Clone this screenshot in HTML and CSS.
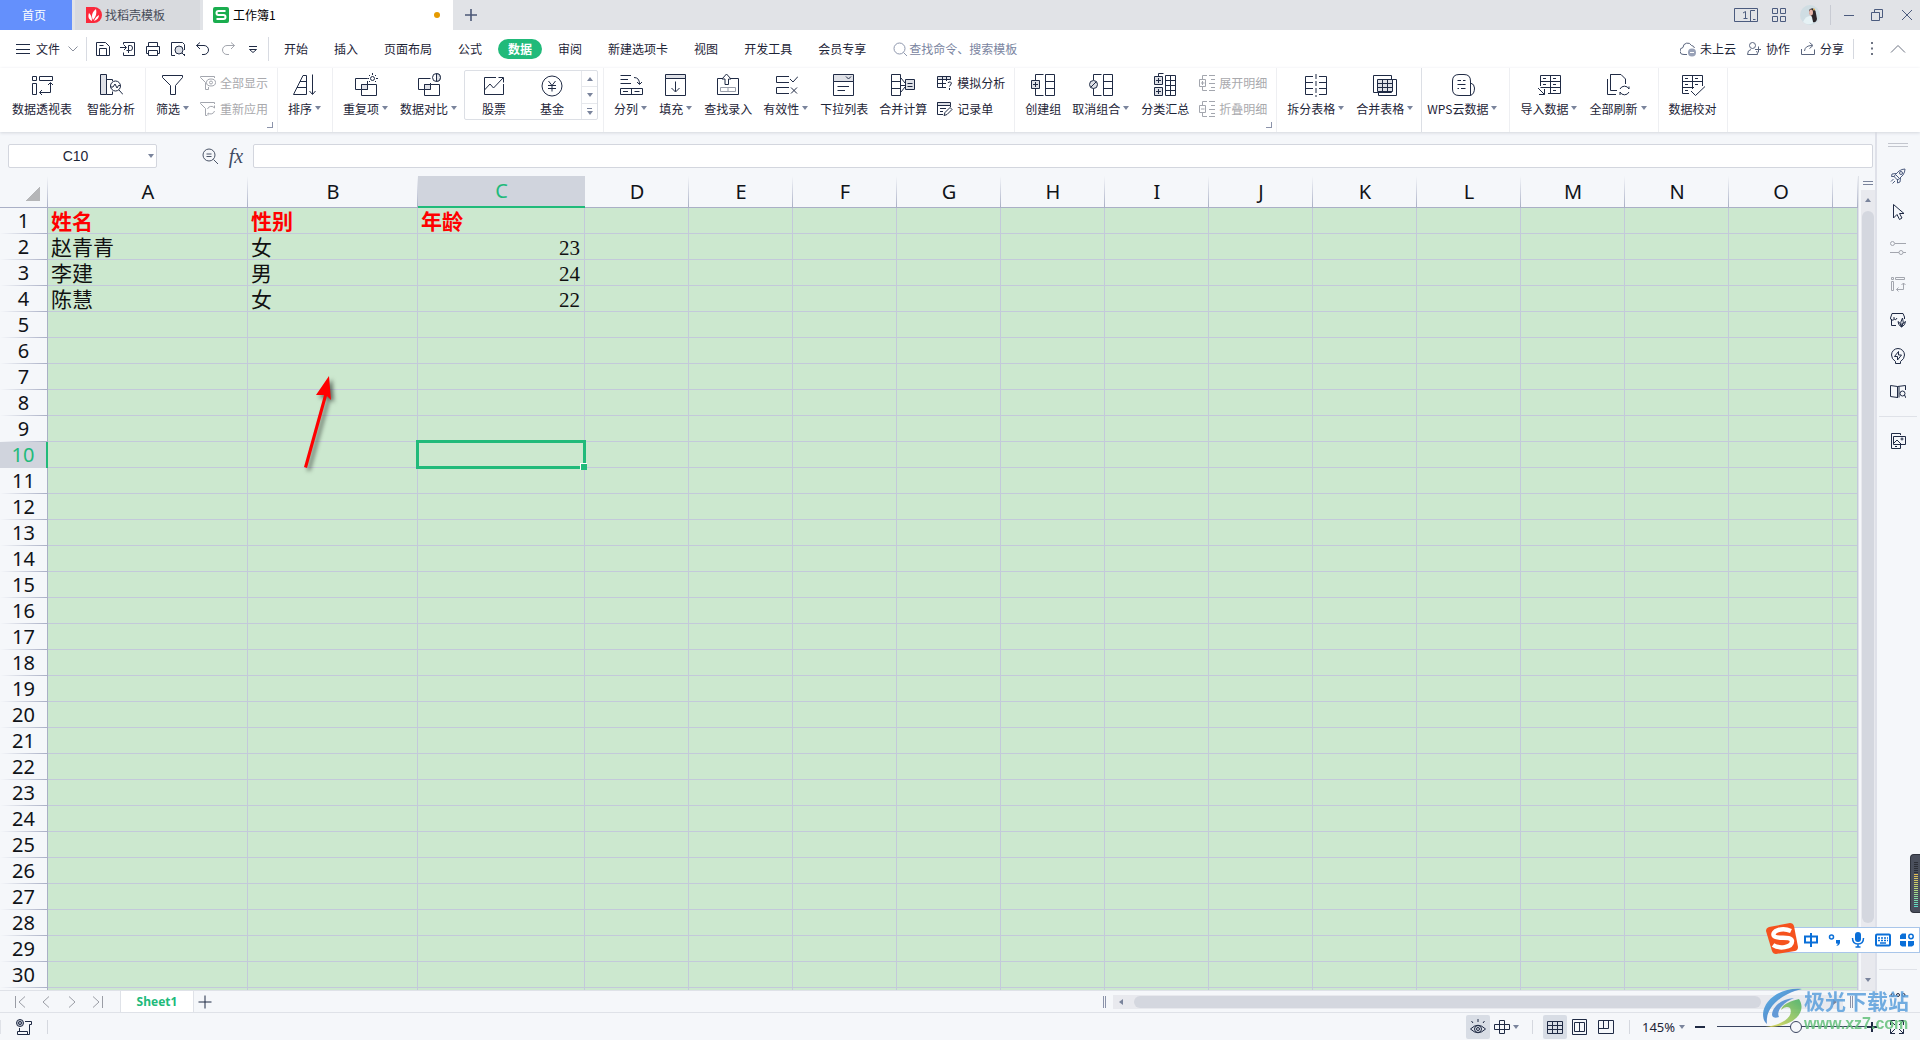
FILE: index.html
```html
<!DOCTYPE html>
<html lang="zh-CN">
<head>
<meta charset="utf-8">
<title>工作簿1</title>
<link rel="stylesheet" href="styles.css">
</head>
<body>
<header class="titlebar">
  <button class="tab tab-home">首页</button>
  <button class="tab tab-docer"><svg width="16" height="16" viewBox="0 0 16 16"><path d="M0 0H8A8 8 0 0 1 8 16H0Z" fill="#fb2a3c"/><path d="M6 14C2 12 2 9 3 6C5 8 6 10 6 14ZM7 13C5 9 6 5 10 2C11 6 10 10 7 13ZM8 14C9 11 11 9 13 8C13 11 11 13 8 14Z" fill="#fff"/></svg>找稻壳模板</button>
  <button class="tab tab-book"><svg width="16" height="16" viewBox="0 0 16 16"><rect width="16" height="16" rx="2" fill="#1aad4f"/><path d="M12.5 4H5.5Q3.5 4 3.5 6T5.5 8H10.5Q12.5 8 12.5 10T10.5 12H3.5" fill="none" stroke="#fff" stroke-width="2"/></svg>工作簿1<i class="unsaved"></i></button>
  <button class="icon-btn new-tab" aria-label="新建"><svg width="12" height="12" viewBox="0 0 12 12"><path d="M6 0V12M0 6H12" stroke="#4b5877" stroke-width="1.6"/></svg></button>
  <div class="window-tools">
    <button class="icon-btn" aria-label="窗口"><svg width="24" height="14" viewBox="0 0 24 14" class="blue"><path d="M.5 .5H23.5V13.5H.5ZM16.5 2.5H21M16.5 2.5V13.5M19 11.5H21.5M9 5L11.5 3.5V10.5M9.5 10.5H13.5"/></svg></button>
    <button class="icon-btn" aria-label="应用"><svg width="14" height="14" viewBox="0 0 14 14" class="blue"><path d="M.5 .5H5.5V5.5H.5ZM8.500 .5H13.5V5.5H8.500ZM.5 8.500H5.5V13.5H.5ZM8.500 8.500H13.5V13.5H8.500Z"/></svg></button>
    <button class="icon-btn" aria-label="账户"><svg class="avatar" width="20" height="20" viewBox="0 0 20 20"><circle cx="10" cy="10" r="10" fill="#cfdde3"/><path d="M9 5Q13 1 15.500 6L17 14Q16 18 13 17L12 12L9 8Z" fill="#2a2428"/><ellipse cx="11" cy="7.500" rx="2" ry="3" fill="#e6b8ac"/><path d="M3 17Q6 10 11 11L13 18Q8 21 3 17Z" fill="#e6f2f5"/><circle cx="14" cy="4.500" r="1" fill="#e0b45a"/></svg></button>
    <i class="vline"></i>
    <button class="icon-btn" aria-label="最小化"><svg width="12" height="12" viewBox="0 0 12 12" class="blue"><path d="M1 6.500H11"/></svg></button>
    <button class="icon-btn" aria-label="还原"><svg width="12" height="12" viewBox="0 0 12 12" class="blue"><path d="M3.500 3.500V.5H11.500V8.500H8.500M.5 3.500H8.500V11.500H.5Z"/></svg></button>
    <button class="icon-btn" aria-label="关闭"><svg width="12" height="12" viewBox="0 0 12 12" class="blue"><path d="M1 1L11 11M11 1L1 11"/></svg></button>
  </div>
</header>

<nav class="menubar">
  <button class="file-menu"><svg width="14" height="12" viewBox="0 0 14 12"><path d="M0 1.500H14M0 6.500H14M0 10.500H14"/></svg>文件<svg width="10" height="6" viewBox="0 0 10 6" class="chev"><path d="M.5 .5L5 5L9.500 .5"/></svg></button>
  <div class="quick">
    <button class="icon-btn" aria-label="保存"><svg width="16" height="16" viewBox="0 0 16 16"><path d="M1.500 1.500H10.500L14.500 5.500V14.500H1.500ZM4.500 14V7.500H11.500V14M4.500 4.500H8.500"/></svg></button>
    <button class="icon-btn" aria-label="输出PDF"><svg width="16" height="16" viewBox="0 0 16 16"><path d="M3.500 3.500V1.500H14.500V14.500H3.500V11.500M0 6.500H6M4 4L6.500 6.500L4 9M8.500 12V9.500H6.500M8.500 9.500V4.500H10.500Q12.500 4.500 12.500 7T10.500 9.500H8.500"/></svg></button>
    <button class="icon-btn" aria-label="打印"><svg width="16" height="16" viewBox="0 0 16 16"><path d="M3.500 5V1.500H12.500V5M3.500 12.500H1.500V5.500H14.500V12.500H12.500M3.500 9.500H12.500V14.500H3.500Z"/></svg></button>
    <button class="icon-btn" aria-label="打印预览"><svg width="16" height="16" viewBox="0 0 16 16"><path d="M5 14.500H1.500V1.500H12.500L14.500 3.500V9"/><circle cx="9" cy="9" r="4" fill="#dcdfe6"/><path d="M12 12L15 15M14.500 13V15"/></svg></button>
    <button class="icon-btn" aria-label="撤销"><svg width="16" height="16" viewBox="0 0 16 16"><path d="M5 1.500L1.500 4.500L5 8M1.500 4.500H9A4.500 4.500 0 0 1 9 13.500H7"/></svg></button>
    <button class="icon-btn pale" aria-label="恢复"><svg width="16" height="16" viewBox="0 0 16 16"><path d="M11 1.500L14.500 4.500L11 8M14.500 4.500H7A4.500 4.500 0 0 0 7 13.500H9"/></svg></button>
    <button class="icon-btn" aria-label="自定义"><svg width="16" height="16" viewBox="0 0 16 16"><path d="M4 5.500H12M4.500 8.500L8 11.500L11.500 8.500Z"/></svg></button>
  </div>
  <div class="menus">
    <button>开始</button><button>插入</button><button>页面布局</button><button>公式</button><button class="on">数据</button><button>审阅</button><button>新建选项卡</button><button>视图</button><button>开发工具</button><button>会员专享</button>
  </div>
  <label class="search"><svg width="15" height="15" viewBox="0 0 15 15"><circle cx="6.500" cy="6.500" r="5.500"/><path d="M10.500 10.500L14 14"/></svg><input type="text" placeholder="查找命令、搜索模板" aria-label="查找命令"></label>
  <div class="share-tools">
    <button><svg width="16" height="16" viewBox="0 0 16 16"><path d="M7 13.500H4A3.500 3.500 0 0 1 3 6.500A4.500 4.500 0 0 1 11.500 4.500A3.500 3.500 0 0 1 14.500 7"/><circle cx="12" cy="11.500" r="4" fill="#99a2b8" stroke="none"/><path d="M10 11.500H14" stroke="#fff"/></svg>未上云</button>
    <button><svg width="16" height="16" viewBox="0 0 16 16"><circle cx="6.500" cy="4.500" r="3"/><path d="M5 8.500Q1.500 9 1.500 13.500H11.500Q11.500 11 10.500 10M9 8.500H15M12.500 5.500V11.500"/></svg>协作</button>
    <button><svg width="16" height="16" viewBox="0 0 16 16"><path d="M1.500 8V13.500H14.500V8.500M4.500 10Q5 4.500 12 4.500M9.500 1.500L13 4.500L9.500 7.500"/></svg>分享</button>
  </div>
  <i class="vline"></i>
  <button class="icon-btn more" aria-label="更多"><svg width="4" height="14" viewBox="0 0 4 14"><path d="M1 1H3M1 6.500H3M1 12H3" stroke-width="2"/></svg></button>
  <button class="icon-btn" aria-label="收起"><svg width="16" height="10" viewBox="0 0 16 10"><path d="M1 8.500L8 1.500L15 8.500"/></svg></button>
</nav>

<section class="ribbon">
  <div class="group first">
    <button class="cmd"><svg viewBox="0 0 24 24"><path d="M2.500 3.500H6.500V7.500H2.500ZM9.500 3.500H22.500V7.500H9.500ZM2.500 10.500H6.500V21.500H2.500ZM10 19.500H20.500V10M12 17L9.500 19.500L12 22M18 12L20.500 9.500L23 12"/></svg><span>数据透视表</span></button>
    <button class="cmd"><svg viewBox="0 0 24 24"><path d="M1.500 1.500H7.500V21.500H1.500Z" fill="#dfe1e7"/><path d="M7.500 6.500H13.500V8M7.500 21.500H13.500V18.500M20 17L24 21.500"/><circle cx="16.500" cy="13" r="5"/><path d="M11.500 14L14 14L16 11L18 15L19.500 12.500H21"/></svg><span>智能分析</span></button>
  </div>
  <div class="group launcher">
    <button class="cmd drop"><svg viewBox="0 0 24 24"><path d="M1.500 2.500H21.500V4.500L14.500 12.500V21.500H9.500V12.500L1.500 4.500Z"/></svg><span>筛选</span></button>
    <div class="stack pale">
      <button><svg viewBox="0 0 16 16"><path d="M5.500 14.500V7.500L.5 2.500V1.500H14.500V3M5.500 14.500H8.500V12"/><ellipse cx="11" cy="7.500" rx="4.500" ry="3.500"/><circle cx="11" cy="7.500" r="1.500"/></svg>全部显示</button>
      <button><svg viewBox="0 0 16 16"><path d="M5.500 14.500V7.500L.5 2.500V1.500H14.500V3M5.500 14.500H7M7.500 8A4 4 0 0 1 14.500 7V4.500M14.500 10A4 4 0 0 1 8 12V14.500"/></svg>重新应用</button>
    </div>
  </div>
  <div class="group">
    <button class="cmd drop"><svg viewBox="0 0 24 24"><path d="M.5 21.500L10 2.500H13.500V21.500ZM7 8.500H13.500M4 14.500H13.500M19.500 1.500V21M16.500 18L19.500 21.500L22.500 18"/></svg><span>排序</span></button>
  </div>
  <div class="group">
    <button class="cmd drop"><svg viewBox="0 0 24 24"><path d="M13.500 5.500H1.500V16.500H7.500M13.500 8V16.500M7.500 11.500H22.500V22.500H7.500ZM7.500 16.500H13.500V11.500"/><path d="M7.500 11.500H13.500V16.500H7.500Z" fill="#dfe1e7"/><circle cx="18.500" cy="5.500" r="2"/><path d="M18.500 0V2M13.500 5.500H15M22 5.500H24M15 2L16 3M22 2L21 3M15 9L16 8M22 9L21 8"/></svg><span>重复项</span></button>
    <button class="cmd drop"><svg viewBox="0 0 24 24"><path d="M13.500 5.500H1.500V16.500H7.500M13.500 10V16.500M7.500 11.500H22.500V22.500H7.500Z"/><path d="M7.500 11.500H13.500V16.500H7.500Z" fill="#dfe1e7"/><circle cx="19.500" cy="4.500" r="4"/><path d="M19.500 .5V8.500A4 4 0 0 0 19.500 .5" fill="#dfe1e7"/></svg><span>数据对比</span></button>
    <div class="gallery">
      <button class="cmd"><svg viewBox="0 0 24 24"><path d="M14 4.500H2.500V21.500H21.500V11M2.500 17L8 11L11.500 15L21 5M16.500 4.500H21.500V9.500"/></svg><span>股票</span></button>
      <button class="cmd"><svg viewBox="0 0 24 24"><circle cx="12" cy="13" r="10"/><path d="M8.500 8L12 12.500L15.500 8M12 12.500V18.500M8 12.500H16M8 15.500H16"/></svg><span>基金</span></button>
      <div class="gallery-nav"><button aria-label="上"><i class="caret up"></i></button><button aria-label="下"><i class="caret"></i></button><button aria-label="展开" class="all"><i class="caret"></i></button></div>
    </div>
  </div>
  <div class="group">
    <button class="cmd drop"><svg viewBox="0 0 24 24"><path d="M1.500 2.500H12M1.500 6.500H9M1.500 10.500H12M15 4.500Q20.500 4.500 20.500 11M18 9L20.500 11.500L23 9M1.500 15.500H23.500V21.500H1.500ZM12.500 15.500V21.500M4 18.500H9M15.500 18.500H20.500"/></svg><span>分列</span></button>
    <button class="cmd drop"><svg viewBox="0 0 24 24"><path d="M1.500 1.500H21.500V5.500H1.500Z" fill="#dfe1e7"/><path d="M1.500 5.500H21.500V22.500H1.500ZM11.500 8.500V18.500M7.500 15L11.500 19L15.500 15"/></svg><span>填充</span></button>
    <button class="cmd"><svg viewBox="0 0 24 24"><path d="M7 5.500H1.500V21.500H22.500V5.500H14"/><path d="M4.500 14.500H19.500V18.500H4.500ZM12 14.500V18.500" stroke="#999eaa"/><path d="M9 11.500V6H6L10.500 1L15 6H12.500V11.500Z" fill="#fff"/></svg><span>查找录入</span></button>
    <button class="cmd drop"><svg viewBox="0 0 24 24"><path d="M15 3.500H2.500V9.500H15M15 14.500H2.500V20.500H15M16 6L19 9L24 3.500M17 14.500L23 20.500M23 14.500L17 20.500"/></svg><span>有效性</span></button>
    <button class="cmd"><svg viewBox="0 0 24 24"><path d="M1.500 1.500H21.500V8.500H1.500Z" fill="#dfe1e7"/><path d="M1.500 8.500H21.500V22.500H1.500ZM14 3.500L16.500 6L19 3.500M5.500 13.500H17M5.500 17.500H13"/></svg><span>下拉列表</span></button>
    <button class="cmd"><svg viewBox="0 0 24 24"><path d="M.5 1.500H9.500V22.500H.5ZM.5 8.500H9.500M.5 15.500H9.500M10 5L14 10M10 12.500H14M10 19L14 14"/><path d="M14.500 6.500H23.500V16.500H14.500Z" fill="#dfe1e7"/><path d="M16.500 10.500H21.500M16.500 13.500H21.500"/></svg><span>合并计算</span></button>
    <div class="stack">
      <button><svg viewBox="0 0 16 16"><path d="M.5 1.500H13.500V4.500H.5Z" fill="#dfe1e7"/><path d="M9 12.500H.5V4.500H13.500M.5 8.500H9M5.500 1.500V12.500M9.500 1.500V6M11 8Q11.500 6.500 13.500 7T13.500 10L12.500 11.500M12.500 13V15"/></svg>模拟分析</button>
      <button><svg viewBox="0 0 16 16"><path d="M.5 1.500H13.500V4.500H.5Z" fill="#dfe1e7"/><path d="M6 13.500H.5V1.500M13.500 4.500V6M3 7.500H9M3 10.500H6M7 14.500L8 11.500L13 6.500L15 8.500L10 13.500Z"/></svg>记录单</button>
    </div>
  </div>
  <div class="group launcher">
    <button class="cmd"><svg viewBox="0 0 24 24"><path d="M12.500 1.500H4.500V7M4.500 15V22.500H12.500M14.500 1.500H23.500V22.500H14.500ZM14.500 8.500H23.500M14.500 15.500H23.500"/><path d="M.5 7.500H8.500V15.500H.5Z" fill="#dfe1e7"/><path d="M4.500 9V14M2 11.500H7"/></svg><span>创建组</span></button>
    <button class="cmd drop"><svg viewBox="0 0 24 24"><path d="M12.500 1.500H4.500V7M4.500 15V22.500H12.500M14.500 1.500H23.500V22.500H14.500ZM14.500 8.500H23.500M14.500 15.500H23.500"/><circle cx="4.500" cy="11.500" r="4" fill="#dfe1e7"/><path d="M2 14L7 9"/></svg><span>取消组合</span></button>
    <button class="cmd"><svg viewBox="0 0 24 24"><path d="M5.500 3V.5H10.500M12.500 2.500H22.500V22.500H12.500ZM12.500 7.500H22.500M12.500 12.500H22.500M12.500 17.500H22.500M17.500 2.500V22.500"/><path d="M1.500 3.500H9.500V11.500H1.500ZM1.500 14.500H9.500V22.500H1.500Z" fill="#dfe1e7"/><path d="M5.500 5V10M3 7.500H8M5.500 16V21M3 18.500H8"/></svg><span>分类汇总</span></button>
    <div class="stack pale">
      <button><svg viewBox="0 0 16 16"><path d="M8 .5H3.500V4M3.500 12V15.500H8M.5 4.500H6.500V11.500H.5ZM3.500 6V10M2 8H5.500M10 .5H16M12 4.500H16M10 8.500H16M12 12.500H16M10 15.500H16"/></svg>展开明细</button>
      <button><svg viewBox="0 0 16 16"><path d="M8 .5H3.500V4M3.500 12V15.500H8M.5 4.500H6.500V11.500H.5ZM2 8H5.500M10 .5H16M12 4.500H16M10 8.500H16M12 12.500H16M10 15.500H16"/></svg>折叠明细</button>
    </div>
  </div>
  <div class="group dark">
    <button class="cmd drop"><svg viewBox="0 0 24 24"><path d="M9 3.500H1.500V21.500H9M1.500 9.500H9M1.500 15.500H9M15 3.500H22.500V21.500H15M22.500 9.500H15M22.500 15.500H15"/><path d="M12 1V24" stroke-dasharray="5 2"/></svg><span>拆分表格</span></button>
    <button class="cmd drop"><svg viewBox="0 0 24 24"><path d="M.5 2.500H18.500V19.500H.5ZM18.500 6.500H23.500V22.500H5.500V19.500"/><path d="M4.500 6.500H19.500V18.500H4.500Z" fill="#dfe1e7"/><path d="M4.500 10.500H19.500M4.500 14.500H19.500M9.500 6.500V18.500M14.500 6.500V18.500"/></svg><span>合并表格</span></button>
  </div>
  <div class="group cloud">
    <button class="cmd drop"><svg viewBox="0 0 24 24"><path d="M8 1.500H13Q19.500 1.500 19.500 8V22.500H8Q1.500 22.500 1.500 16V8Q1.500 1.500 8 1.500ZM19.500 10Q23.500 11 23.500 15Q23.500 21 19.500 22.500M6.500 7.500H10M12 7.500H14.500M6.500 11.500H14.500M6.500 15.500H8M10 15.500H14.500"/></svg><span>WPS云数据</span></button>
  </div>
  <div class="group">
    <button class="cmd drop"><svg viewBox="0 0 24 24"><path d="M3.500 13V2.500H23.500V20.500H11M3.500 8.500H23.500M3.500 14.500H23.500M13.500 2.500V20.500M6 5.500H9M16 5.500H19M6 11.500H9M16 11.500H19M16 17.500H19M1 15L7.500 21.500M7.500 16V21.500H2"/></svg><span>导入数据</span></button>
    <button class="cmd drop"><svg viewBox="0 0 24 24"><path d="M4.500 4V1.500H15L19.500 6V11M4.500 1.500V17.500H11M1.500 6V21.500H10M14 16A5 5 0 0 1 23 16V13.500M23 19A5 5 0 0 1 14 19V22"/></svg><span>全部刷新</span></button>
  </div>
  <div class="group">
    <button class="cmd"><svg viewBox="0 0 24 24"><path d="M8 20.500H1.500V2.500H21.500V13M1.500 8.500H21.500M1.500 14.500H13M11.500 2.500V16M4 5.500H7M14 5.500H17M4 11.500H7M14 11.500H17M4 17.500H7M10 18L14.500 22.500L24 13.500"/></svg><span>数据校对</span></button>
  </div>
</section>

<div class="workspace">
  <main class="sheet-area">
    <div class="formula-bar">
      <label class="name-box"><input type="text" value="C10" aria-label="名称框"><i class="caret"></i></label>
      <button class="icon-btn find" aria-label="查看"><svg width="17" height="17" viewBox="0 0 17 17"><circle cx="7" cy="7" r="6"/><path d="M11.500 11.500L16 16M4.500 6H9.500M4.500 8.500H9.500"/></svg></button>
      <button class="icon-btn fx" aria-label="插入函数">fx</button>
      <input class="formula" type="text" aria-label="编辑栏">
    </div>
    <div class="grid-row">
      <div class="grid">
        <table>
          <colgroup><col class="w-head"><col class="w-a"><col class="w-b"><col class="w-c"><col span="12" class="w-std"><col></colgroup>
          <thead><tr id="letters"></tr></thead>
          <tbody id="rows"></tbody>
        </table>
        <svg class="red-arrow" width="50" height="110" viewBox="0 0 50 110"><path d="M12 99L32 27L24 27L37 8L39 32L35 28L15 100Z" fill="#f00"/></svg>
      </div>
      <div class="vscroll"><i class="split"></i><div class="track"><i class="caret up"></i><i class="thumb"></i><i class="caret"></i></div></div>
    </div>
    <div class="tabs-row">
      <div class="sheet-nav">
        <button class="icon-btn" aria-label="首个"><svg width="12" height="14" viewBox="0 0 12 14"><path d="M1.500 1V13M11 1.500L5 7L11 12.500"/></svg></button>
        <button class="icon-btn" aria-label="上一个"><svg width="12" height="14" viewBox="0 0 12 14"><path d="M9 1.500L3 7L9 12.500"/></svg></button>
        <button class="icon-btn" aria-label="下一个"><svg width="12" height="14" viewBox="0 0 12 14"><path d="M3 1.500L9 7L3 12.500"/></svg></button>
        <button class="icon-btn" aria-label="末个"><svg width="12" height="14" viewBox="0 0 12 14"><path d="M10.500 1V13M1 1.500L7 7L1 12.500"/></svg></button>
      </div>
      <button class="sheet-tab">Sheet1</button>
      <button class="icon-btn add" aria-label="新建工作表"><svg width="14" height="14" viewBox="0 0 14 14"><path d="M7 .5V13.500M.5 7H13.500"/></svg></button>
      <div class="hscroll"><i class="bars"></i><div class="htrack"><i class="caret left"></i><i class="hthumb"></i><i class="caret right"></i></div><i class="bars"></i></div>
    </div>
  </main>
  <aside class="sidebar">
    <i class="grip"></i>
    <button class="icon-btn mid" aria-label="工具箱"><svg width="16" height="16" viewBox="0 0 16 16"><path d="M5.500 6.500L9 3Q12 1 15 1Q15 4 13 7L9.500 10.500ZM6 5.500L2 6L1.500 8.500L4.500 8.500M10.500 10L10 14L7.500 15V11M5.500 6.500L4 8.500L7.500 12L9.500 10.500M3.500 11L1 13.500M5 13L2.500 15.500"/><circle cx="11" cy="5" r="1.500"/></svg></button>
    <button class="icon-btn" aria-label="选择"><svg width="16" height="16" viewBox="0 0 16 16"><path d="M3.500 .5V14L7 10.500L9.500 15.500L12 14L9.500 9.500H14Z"/></svg></button>
    <button class="icon-btn pale" aria-label="属性"><svg width="16" height="16" viewBox="0 0 16 16"><path d="M5 3.500H16M0 12.500H9M13 12.500H16"/><circle cx="2.500" cy="3.500" r="2"/><circle cx="11" cy="12.500" r="2"/></svg></button>
    <button class="icon-btn pale" aria-label="透视表"><svg width="16" height="16" viewBox="0 0 16 16"><path d="M1.500 1.500H3.500V3.500H1.500ZM5.500 1.500H14.500V3.500H5.500ZM1.500 5.500H3.500V14.500H1.500ZM6.500 13.500H13.500V7M8.500 11.500L6.500 13.500L8.500 15.500M11.500 9L13.500 7L15.500 9"/></svg></button>
    <button class="icon-btn" aria-label="稻壳"><svg width="16" height="16" viewBox="0 0 16 16"><path d="M1.500 7V13.500H6M4 7.500A2 2 0 0 1 .5 6L2 1.500H13L14.500 5V7M4 5V7Q6 9 7 6"/><path d="M11.500 15Q8 13 8 9.500Q10.500 10.500 11.500 15ZM11.500 15Q9.500 10 12.500 6Q14.500 10 11.500 15ZM11.500 15Q12.500 10.500 15.500 9.500Q15.500 13 11.500 15Z"/></svg></button>
    <button class="icon-btn" aria-label="灵感"><svg width="16" height="16" viewBox="0 0 16 16"><path d="M5.500 13.500Q1.500 11 1.500 7A6.500 6.500 0 0 1 14.500 7Q14.500 11 10.500 13.500V15.500H5.500ZM8.500 3.500L4.500 8.500H7.500V12L11.500 7H8.500Z"/></svg></button>
    <button class="icon-btn" aria-label="查阅"><svg width="16" height="16" viewBox="0 0 16 16"><path d="M7.500 2.500L.5 1.500V12.500L7.500 13.500M7.500 2.500L15.500 1.500V6M7.500 2.500V14M9 2.500V13.500"/><circle cx="12.500" cy="9.500" r="2.500"/><path d="M14.500 11L16 14"/></svg></button>
    <hr>
    <button class="icon-btn" aria-label="图片"><svg width="16" height="16" viewBox="0 0 16 16"><path d="M10.500 2V.5H1.500V15.500H10.500V12M3.500 3.500H15.500V11.500H3.500ZM4 10L7 7L11 11M5 13.500H7"/><circle cx="12" cy="6" r="1"/></svg></button>
    <hr class="push">
    <button class="icon-btn" aria-label="更多"><svg width="16" height="6" viewBox="0 0 16 6"><circle cx="2.500" cy="3" r="1.500"/><circle cx="8" cy="3" r="1.500"/><circle cx="13.500" cy="3" r="1.500"/></svg></button>
  </aside>
</div>

<footer class="statusbar">
  <button class="icon-btn record" aria-label="宏"><svg width="16" height="16" viewBox="0 0 16 16"><circle cx="4" cy="4" r="3.500" fill="#bfc4d0"/><circle cx="4" cy="4" r="1.500"/><path d="M9 2.500H15.500V5.500H13.500V15.500H1.500V12.500H11.500V15M3.500 9V12.500"/></svg></button>
  <i class="vline"></i>
  <div class="views">
    <button class="icon-btn lit" aria-label="护眼"><svg width="16" height="16" viewBox="0 0 16 16"><path d="M.5 10Q8 2.500 15.500 10Q8 17.500 .5 10ZM8 0V3M1.500 2L3 4M14.500 2L13 4"/><circle cx="8" cy="10" r="3.500"/><circle cx="8" cy="10" r="1.500"/></svg></button>
    <button class="icon-btn cross" aria-label="阅读"><svg width="16" height="16" viewBox="0 0 16 16"><path d="M5.500 1.500H10.500V14.500H5.500ZM.5 5.500H15.500V10.500H.5Z"/></svg><i class="caret"></i></button>
    <i class="vline"></i>
    <button class="icon-btn lit" aria-label="普通"><svg width="16" height="16" viewBox="0 0 16 16"><path d="M.5 2.500H15.500V14.500H.5ZM.5 6.500H15.500M.5 10.500H15.500M5.500 2.500V14.500M10.500 2.500V14.500"/></svg></button>
    <button class="icon-btn" aria-label="分页"><svg width="16" height="16" viewBox="0 0 16 16"><path d="M.5 .5H14.500V15.500H.5ZM2.500 3.500H12.500V12.500H2.500ZM7.500 3.500V12.500"/></svg></button>
    <button class="icon-btn" aria-label="布局"><svg width="16" height="16" viewBox="0 0 16 16"><path d="M.5 1.500H15.500V14.500H.5ZM.5 9.500H10.500V1.500M5.500 1.500V9.500"/></svg></button>
    <i class="vline"></i>
  </div>
  <button class="zoom-value">145%<i class="caret"></i></button>
  <button class="icon-btn" aria-label="缩小"><svg width="10" height="10" viewBox="0 0 10 10"><path d="M0 5H10" stroke-width="2"/></svg></button>
  <input class="zoom" type="range" min="0" max="100" value="53" aria-label="缩放">
  <button class="icon-btn" aria-label="放大"><svg width="10" height="10" viewBox="0 0 10 10"><path d="M0 5H10M5 0V10" stroke-width="2"/></svg></button>
  <button class="icon-btn full" aria-label="全屏"><svg width="16" height="16" viewBox="0 0 16 16"><path d="M1.500 6V1.500H6M10 1.500H14.500V6M14.500 10V14.500H10M6 14.500H1.500V10M1.500 1.500L6 6M14.500 1.500L10 6M14.500 14.500L10 10M1.500 14.500L6 10"/></svg></button>
</footer>

<div class="recorder"></div>

<div class="ime">
  <svg class="ime-logo" width="32" height="32" viewBox="0 0 32 32"><path d="M3 4L24 0Q27 0 28 3L32 24Q32 27 29 28L10 31Q7 31 6 28L0 8Q0 5 3 4Z" fill="#f5521e"/><path d="M25 8C16 4 5 8 8 13C11 17 25 12 26 18C26 25 13 26 7 22" fill="none" stroke="#fff" stroke-width="4.500"/></svg>
  <svg width="14" height="14" viewBox="0 0 14 14"><path d="M1 3.500H13V9.500H1ZM7 0V14" fill="none" stroke="#0a6fd8" stroke-width="2"/></svg>
  <svg width="14" height="14" viewBox="0 0 14 14"><circle cx="3.500" cy="4" r="2" fill="none" stroke="#0a6fd8" stroke-width="1.500"/><path d="M8 7H12V10Q11 13 8 13Q10 12 9.500 10.500H8Z" fill="#0a6fd8"/></svg>
  <svg width="14" height="16" viewBox="0 0 14 16"><rect x="4" width="6" height="10" rx="3" fill="#0a6fd8"/><path d="M1.500 6Q1.500 12 7 12T12.500 6M7 12V15M4.500 15H9.500" fill="none" stroke="#0a6fd8" stroke-width="1.500"/></svg>
  <svg width="16" height="14" viewBox="0 0 16 14"><rect x="1" y="1.500" width="14" height="11" rx="1" fill="none" stroke="#0a6fd8" stroke-width="2"/><path d="M3 5H13M3 7.500H13" stroke="#0a6fd8" stroke-width="1.500" stroke-dasharray="2 1"/><path d="M5 10H11" stroke="#0a6fd8" stroke-width="1.500"/></svg>
  <svg width="14" height="14" viewBox="0 0 14 14"><path d="M2 .5H6V6H0V2.500ZM0 8H6V13.500H2L0 12ZM8 8H14V12L12 13.500H8Z" fill="#0a6fd8"/><circle cx="11" cy="3.500" r="2.200" fill="none" stroke="#0a6fd8" stroke-width="1.500"/></svg>
</div>

<div class="watermark">
  <svg width="42" height="42" viewBox="0 0 42 42"><defs><linearGradient id="swirl" x1="0" y1="0" x2="1" y2="1"><stop offset="0" stop-color="#43b0ec"/><stop offset=".5" stop-color="#3d7fc8"/><stop offset="1" stop-color="#4d6fb8"/></linearGradient><linearGradient id="leaf" x1="0" y1="1" x2="1" y2="0"><stop offset="0" stop-color="#e8d94a"/><stop offset="1" stop-color="#3fae5f"/></linearGradient></defs><path d="M40 1C20-1 2 11 1 26Q1 33 5 36C3 22 15 7 40 1Z" fill="url(#swirl)"/><path d="M32 10C18 11 10 20 10 27Q11 31 17 29C14 24 20 15 32 10Z" fill="#4a8ad2"/><path d="M37 11C46 25 30 40 3 39C20 37 32 29 28 20Q24 17 19 22C21 15 30 13 37 11Z" fill="url(#leaf)"/></svg>
  <div><b>极光下载站</b><span>www.xz7.com</span></div>
</div>
<script src="script.js"></script>
</body>
</html>
```
FILE: styles.css
```css
* { box-sizing: border-box; }
body {
  margin: 0;
  height: 100vh;
  display: flex;
  flex-direction: column;
  overflow: hidden;
  position: relative;
  background: #f5f7fa;
  color: #1d2437;
  font: 12px/16px "Noto Sans CJK SC", sans-serif;
}
button, input { font: inherit; color: inherit; border: 0; padding: 0; margin: 0; background: none; }
button { white-space: nowrap; }
svg { display: block; flex: none; fill: none; stroke: #1f2a44; }
.tab svg, .ime svg, .watermark svg, .red-arrow, .avatar { stroke: none; }
.icon-btn { display: flex; align-items: center; justify-content: center; }
.pale { color: #a9a9ad; }
.pale svg { stroke: #a3a6ae; }
.vline { width: 1px; height: 20px; background: #d5d8df; flex: none; }
.caret { width: 0; height: 0; flex: none; border: 3px solid transparent; border-top: 4px solid #7a849c; border-bottom: 0; }
.caret.up { border-top: 0; border-bottom: 4px solid #7a849c; }
.caret.left { border: 3px solid transparent; border-right: 4px solid #7a849c; border-left: 0; }
.caret.right { border: 3px solid transparent; border-left: 4px solid #7a849c; border-right: 0; }

.titlebar { display: flex; height: 30px; background: #e1e3e7; flex: none; }
.tab { display: flex; align-items: center; gap: 4px; }
.tab-home { width: 72px; justify-content: center; background: #6490fc; color: #fff; padding-right: 4px; }
.tab-docer { width: 125px; margin: 0 3px; padding-left: 11px; gap: 3px; background: #d8dade; color: #474c59; }
.tab-book { width: 250px; padding: 0 13px 0 10px; background: #fff; color: #000; }
.unsaved { width: 6px; height: 6px; margin-left: auto; border-radius: 50%; background: #e59a00; }
.new-tab { width: 36px; }
.window-tools { display: flex; align-items: center; margin-left: auto; gap: 14px; padding-right: 7px; }
.window-tools .vline { margin: 0 -2px 0 -4px; background: #c8cbd3; }
.window-tools .icon-btn:nth-last-child(-n+2) { margin-left: 2px; }
.window-tools .icon-btn:last-child { margin-left: 4px; }
.blue { stroke: #4b5b7e; }

.menubar { display: flex; align-items: center; height: 38px; background: #fff; flex: none; }
.file-menu { display: flex; align-items: center; gap: 6px; padding-left: 16px; width: 86px; }
.file-menu .chev { stroke: #8a8f9c; margin-left: 2px; }
.quick { display: flex; align-items: center; gap: 9px; padding: 0 7px 0 8px; height: 24px; border-left: 1px solid #d8dbe2; border-right: 1px solid #d8dbe2; }
.menus { display: flex; gap: 6px; margin-left: 5px; }
.menus button { height: 20px; padding: 0 10px; border-radius: 10px; }
.menus .on { background: #21ba7a; color: #fff; font-weight: 700; }
.search { display: flex; align-items: center; gap: 1px; margin-left: 17px; }
.search svg { stroke: #8e97ad; }
.search input { width: 130px; }
.search input::placeholder { color: #7a84a0; opacity: 1; }
.share-tools { display: flex; gap: 10px; margin-left: auto; margin-right: 9px; }
.share-tools button { display: flex; align-items: center; gap: 4px; }
.share-tools svg { stroke: #59647d; }
.more { margin: 0 16px; }
.menubar > .icon-btn svg { stroke: #6d7382; }
.menubar > .icon-btn:last-child { margin-right: 14px; }

.ribbon { display: flex; height: 64px; background: #fff; flex: none; padding-left: 2px; position: relative; box-shadow: 0 1px 3px #d4d7de; }
.group { display: flex; align-items: flex-start; gap: 1px; padding: 2px 5px 0; border-right: 1px solid #eeeff2; position: relative; }
.group.first { gap: 5px; }
.group.dark { border-color: #dcdfe5; padding-right: 2px; }
.group.cloud { padding-left: 0; padding-right: 6px; }
.group.launcher::after { content: ""; position: absolute; right: 4px; bottom: 4px; width: 5px; height: 5px; border: solid #8b93aa; border-width: 0 1px 1px 0; }
.cmd { display: flex; flex-direction: column; align-items: center; gap: 4px; padding: 3px 5px 0; }
.cmd svg { width: 24px; height: 24px; }
.cmd span { display: flex; align-items: center; }
.drop span::after { content: ""; margin: 0 1px 2px 3px; border: 3px solid transparent; border-top: 4px solid #7a849c; border-bottom: 0; }
.stack { padding: 0 4px; }
.stack button { display: flex; align-items: center; gap: 4px; height: 26px; }
.stack svg { width: 16px; height: 16px; }
.gallery { display: flex; width: 134px; height: 50px; border: 1px solid #dcdfe5; border-radius: 2px; }
.gallery .cmd { flex: 1; padding-top: 2px; }
.gallery-nav { width: 16px; display: flex; flex-direction: column; border-left: 1px solid #e6e8ec; }
.gallery-nav button { flex: 1; display: flex; flex-direction: column; gap: 2px; align-items: center; justify-content: center; border-bottom: 1px solid #e6e8ec; }
.gallery-nav .all { border: 0; }
.gallery-nav .all::before { content: ""; width: 5px; height: 1px; background: #7a849c; }

.workspace { flex: 1; min-height: 0; display: flex; }
.sheet-area { flex: 1; min-width: 0; display: flex; flex-direction: column; }
.formula-bar { display: flex; align-items: center; height: 44px; padding: 4px 2px 0 8px; flex: none; }
.name-box { display: flex; align-items: center; width: 149px; height: 24px; background: #fff; border: 1px solid #d3d6de; border-radius: 2px; padding-right: 2px; }
.name-box input { flex: 1; min-width: 0; text-align: center; padding-right: 6px; font: 14px/20px "Liberation Sans", sans-serif; }
.find { margin-left: 45px; }
.formula-bar svg { stroke: #4b5568; }
.fx { width: 24px; margin: 0 5px; font: italic 20px/20px "Liberation Serif", serif; color: #3f4a60; }
.formula { flex: 1; height: 24px; background: #fff; border: 1px solid #d3d6de; border-radius: 2px; padding: 0 6px; }

.grid-row { flex: 1; min-height: 0; display: flex; }
.grid { flex: 1; min-width: 0; overflow: hidden; position: relative; background: #cce8cf; border-right: 1px solid #dfe2e8; }
table { width: 100%; table-layout: fixed; border-collapse: separate; border-spacing: 0; }
.w-head { width: 48px; }
.w-a { width: 200px; }
.w-b { width: 170px; }
.w-c { width: 167px; }
.w-std { width: 104px; }
th { padding: 0; font: 20px/24px "Noto Sans", sans-serif; color: #101318; background: #f5f7fa; white-space: nowrap; }
thead th { height: 32px; border-bottom: 1px solid #aab0c6; background: linear-gradient(#f5f7fa, #aab0c6) right / 1px 100% no-repeat #f5f7fa; }
tbody th { height: 26px; border-right: 1px solid #aab0c6; background: linear-gradient(90deg, #f5f7fa, #aab0c6) bottom / 100% 1px no-repeat #f5f7fa; }
thead th.picked { background: #d0d4dd; color: #21ba7a; border-bottom: 2px solid #21ba7a; }
tbody th.picked { background: #d0d4dd; color: #21ba7a; border-right: 2px solid #21ba7a; }
.corner::after { content: ""; display: block; width: 15px; height: 15px; margin: 4px 0 0 25px; background: linear-gradient(135deg, transparent 50%, #b5b6b8 50%); }
td { height: 26px; padding: 3px 4px 0 3px; border: solid #c3c9da; border-width: 0 1px 1px 0; font: 21px/22px "Liberation Serif", "Noto Sans CJK SC", serif; color: #111; white-space: nowrap; }
td.title { color: #f00; font-weight: 700; }
td.number { text-align: right; }
td.active { position: relative; }
td.active::before { content: ""; position: absolute; inset: -2px; border: 3px solid #21ba7a; z-index: 1; }
td.active::after { content: ""; position: absolute; right: -3px; bottom: -3px; width: 6px; height: 6px; background: #21ba7a; border: solid #fff; border-width: 1px 0 0 1px; z-index: 2; }
.red-arrow { position: absolute; left: 292px; top: 192px; filter: drop-shadow(3px 3px 2px #0008); }

.vscroll { width: 16px; display: flex; flex-direction: column; align-items: flex-end; }
.split { width: 10px; height: 4px; margin: 5px 2px; border: solid #7a849c; border-width: 1px 0; flex: none; }
.track { flex: 1; width: 14px; display: flex; flex-direction: column; align-items: center; padding: 8px 0; background: #e8e9ee; }
.thumb { flex: 1; width: 12px; margin: 9px 0 55px; border-radius: 6px; background: #d4d7df; }

.tabs-row { display: flex; align-items: center; height: 22px; flex: none; border-top: 1px solid #dfe2e8; }
.sheet-nav { display: flex; gap: 14px; padding: 0 16px 0 14px; }
.sheet-nav svg { stroke: #9a9da5; }
.sheet-tab { align-self: stretch; width: 74px; background: #fff; border: solid #dfe2e8; border-width: 0 1px; color: #21ba7a; font: 700 12px/20px "Noto Sans", sans-serif; }
.add { margin-left: 4px; }
.hscroll { display: flex; align-items: center; width: 750px; margin-left: auto; margin-right: 22px; gap: 7px; }
.bars { width: 3px; height: 12px; border: solid #8b93aa; border-width: 0 1px; flex: none; }
.htrack { flex: 1; display: flex; align-items: center; height: 14px; padding: 0 6px; background: #e8e9ee; }
.hthumb { flex: 1; height: 12px; margin: 0 72px 0 11px; border-radius: 6px; background: #d4d7df; }

.sidebar { width: 45px; flex: none; display: flex; flex-direction: column; align-items: center; border-left: 2px solid #dfe1e9; padding: 0 1px 8px 0; }
.sidebar .icon-btn { height: 36px; }
.sidebar .icon-btn:last-child { height: 18px; }
.grip { width: 20px; height: 4px; margin: 11px 0; border: solid #c3c6ce; border-width: 1px 0; flex: none; }
.mid svg { stroke: #4d5c7e; }
.sidebar hr { width: 38px; margin: 6px 0; border: 0; border-top: 1px solid #dfe2e8; }
.sidebar .push { margin-top: auto; margin-bottom: 16px; }

.statusbar { display: flex; align-items: center; height: 28px; flex: none; border-top: 1px solid #dfe2e8; padding-right: 15px; }
.record { width: 47px; border-left: 1px solid #dfe2e8; height: 14px; }
.statusbar .vline { height: 14px; }
.views { display: flex; align-items: center; margin-left: auto; }
.views .icon-btn { width: 26px; height: 24px; }
.views .lit { width: 24px; background: #d8dde5; border-radius: 2px; }
.views .cross { gap: 3px; width: 32px; }
.views .vline { margin: 0 10px; }
.views .vline:last-child { margin-right: 12px; }
.zoom-value { display: flex; align-items: center; gap: 4px; width: 53px; font: 13px/16px "Noto Sans", sans-serif; }
.zoom { appearance: none; width: 150px; height: 16px; margin: 0 0 0 12px; background: linear-gradient(#3a4560, #3a4560) center / 100% 1px no-repeat; }
.zoom::-webkit-slider-thumb { appearance: none; width: 12px; height: 12px; border: 1px solid #3a4560; border-radius: 50%; background: #f5f7fa; }
.full { margin-left: 12px; }

.recorder { position: absolute; right: 0; top: 854px; width: 10px; height: 59px; border: 1px solid #2f333d; border-right: 0; border-radius: 4px 0 0 4px; background: repeating-linear-gradient(#4a4f5c 0 1px, transparent 1px 2px) 3px 6px / 4px 46px no-repeat, linear-gradient(#2b2e36 0 25%, #e8b84e 25%, #b8d877 60%, #57dcc8) 3px 6px / 4px 46px no-repeat, #4a4f5c; }
.ime { position: absolute; right: 0; top: 927px; width: 140px; height: 26px; display: flex; align-items: center; justify-content: space-between; padding: 0 5px 0 23px; background: #fff; border: 1px solid #a9c6ea; }
.ime .ime-logo { position: absolute; left: -15px; top: -5px; }
.watermark { position: absolute; right: 11px; bottom: 7px; display: flex; align-items: center; opacity: .85; }
.watermark div { display: flex; flex-direction: column; }
.watermark b { font-size: 21px; line-height: 30px; color: #5b9fdc; }
.watermark span { font: 700 16px/18px "Liberation Sans", sans-serif; color: #64c07b; }
```
FILE: script.js
```js
const data = [["姓名", "性别", "年龄"], ["赵青青", "女", 23], ["李建", "男", 24], ["陈慧", "女", 22]];
const letters = " ABCDEFGHIJKLMNO".split("").concat("");
const head = document.getElementById("letters");
letters.forEach((letter, i) => {
  const th = document.createElement("th");
  th.textContent = letter.trim();
  if (i === 0) th.className = "corner";
  if (letter === "C") th.className = "picked";
  head.append(th);
});
const body = document.getElementById("rows");
for (let r = 1; r <= 31; r++) {
  const tr = document.createElement("tr");
  const th = document.createElement("th");
  th.textContent = r <= 30 ? r : "";
  if (r === 10) th.className = "picked";
  tr.append(th);
  for (let c = 0; c < letters.length - 1; c++) {
    const td = document.createElement("td");
    const value = (data[r - 1] || [])[c];
    if (value !== undefined) {
      td.textContent = value;
      if (r === 1) td.className = "title";
      if (typeof value === "number") td.className = "number";
    }
    if (r === 10 && c === 2) td.className = "active";
    tr.append(td);
  }
  body.append(tr);
}
```
